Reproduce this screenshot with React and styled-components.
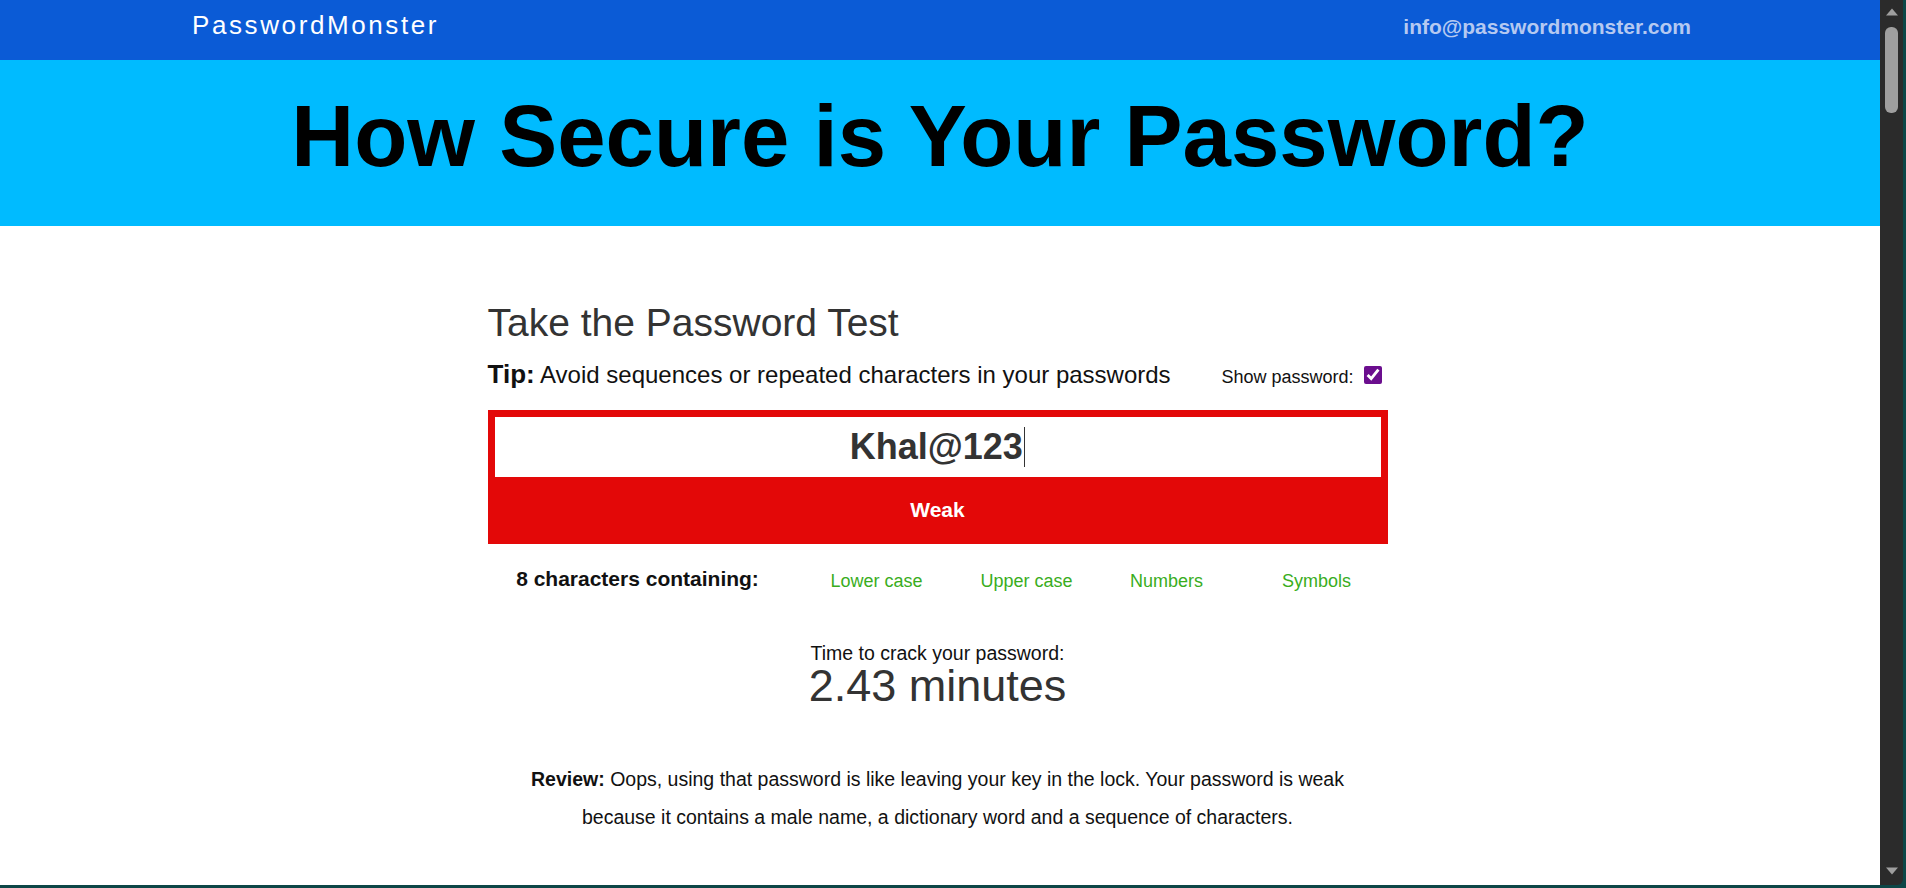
import React from 'react'
import styled, { createGlobalStyle } from 'styled-components'

const GlobalStyle = createGlobalStyle`
  html, body {
    margin: 0;
    padding: 0;
    overflow: hidden;
  }
  body {
    font-family: "Liberation Sans", Arial, sans-serif;
  }
`;

const criteria = ["Lower case", "Upper case", "Numbers", "Symbols"];

const Window = styled.div`
  width: 1906px;
  height: 888px;
  background: #0d4647;
  display: flex;
  flex-direction: column;
`;
const Viewport = styled.div`
  height: 885px;
  display: flex;
`;
const Page = styled.div`
  width: 1880px;
  background: #fff;
  overflow: hidden;
`;
const Scrollbar = styled.div`
  width: 23px;
  background: #2b2b2b;
  border-bottom-right-radius: 6px;
  display: flex;
  flex-direction: column;
  align-items: center;
  padding: 8px 0 10px;
  box-sizing: border-box;
`;
const Thumb = styled.div`
  width: 13px;
  height: 86px;
  margin-top: 11px;
  border-radius: 6px;
  background: #9f9f9f;
`;
const Track = styled.div`
  flex: 1;
`;

const Nav = styled.header`
  height: 60px;
  background: #0b5bd6;
`;
const NavInner = styled.div`
  width: 1500px;
  height: 100%;
  margin: 0 auto;
  display: flex;
  justify-content: space-between;
  align-items: center;
  padding-bottom: 6px;
  box-sizing: border-box;
`;
const Brand = styled.a`
  color: #fff;
  font-size: 26px;
  letter-spacing: 2.6px;
  text-decoration: none;
  margin-left: 2px;
  padding-bottom: 4px;
`;
const Email = styled.a`
  color: #b5c9f1;
  font-size: 21px;
  font-weight: bold;
  text-decoration: none;
  margin-right: -1px;
`;

const Hero = styled.section`
  height: 166px;
  background: #00bbff;
  padding-top: 32px;
  box-sizing: border-box;
`;
const Heading = styled.h1`
  margin: 0;
  font-size: 87px;
  line-height: 1;
  font-weight: bold;
  color: #000;
  text-align: center;
`;

const Main = styled.main`
  width: 900px;
  margin: 0 auto;
  padding: 74px 5px 0 0;
`;
const Title = styled.h2`
  margin: 0;
  font-size: 39px;
  line-height: 1.2;
  font-weight: normal;
  color: #333;
`;
const TipRow = styled.div`
  margin-top: 12px;
  display: flex;
  justify-content: space-between;
  align-items: baseline;
`;
const Tip = styled.p`
  margin: 0;
  font-size: 24px;
  line-height: 1.2;
  color: #111;
  b {
    font-size: 26px;
  }
`;
const Toggle = styled.label`
  display: flex;
  align-items: center;
  gap: 10px;
  font-size: 18px;
  color: #111;
  margin-right: 6px;
`;
const Check = styled.input`
  width: 18px;
  height: 18px;
  margin: 0 0 4px;
  accent-color: #6b0e8e;
`;

const Meter = styled.div`
  margin-top: 20px;
  background: #e30808;
  padding: 7px 7px 0;
`;
const Field = styled.div`
  height: 60px;
  background: #fff;
  display: flex;
  justify-content: center;
  align-items: center;
  font-size: 36px;
  font-weight: bold;
  color: #333;
`;
const Caret = styled.span`
  width: 1.5px;
  height: 40px;
  margin-left: 1px;
  background: #333;
`;
const Strength = styled.div`
  height: 67px;
  display: flex;
  justify-content: center;
  align-items: center;
  color: #fff;
  font-size: 21px;
  font-weight: bold;
`;

const Composition = styled.div`
  margin-top: 22px;
  display: grid;
  grid-template-columns: 300px 178px 122px 158px 1fr;
  align-items: center;
  line-height: 24px;
  text-align: center;
`;
const Count = styled.span`
  font-size: 21px;
  font-weight: bold;
  color: #111;
`;
const Criterion = styled.span`
  font-size: 18px;
  color: ${(props) => (props.met ? "#39ad1d" : "#bbb")};
  padding-top: 3px;
`;

const Crack = styled.div`
  margin-top: 50px;
  text-align: center;
`;
const CrackLabel = styled.div`
  font-size: 19.5px;
  line-height: 21px;
  color: #111;
`;
const CrackTime = styled.div`
  font-size: 45px;
  line-height: 44px;
  color: #333;
`;

const Review = styled.p`
  width: 830px;
  margin: 52px auto 0;
  font-size: 19.5px;
  line-height: 38px;
  text-align: center;
  color: #111;
`;

function Arrow({ down }) {
  return (
    <svg width="14" height="8" viewBox="0 0 14 8">
      <path d={down ? "M1 0.5 H13 L7 7.5 Z" : "M7 0.5 L13 7.5 H1 Z"} fill="#9f9f9f" />
    </svg>
  );
}

export default function App() {
  return (
    <Window>
      <GlobalStyle />
      <Viewport>
        <Page>
          <Nav>
            <NavInner>
              <Brand href="#">PasswordMonster</Brand>
              <Email href="#">info@passwordmonster.com</Email>
            </NavInner>
          </Nav>
          <Hero>
            <Heading>How Secure is Your Password?</Heading>
          </Hero>
          <Main>
            <Title>Take the Password Test</Title>
            <TipRow>
              <Tip>
                <b>Tip:</b> Avoid sequences or repeated characters in your passwords
              </Tip>
              <Toggle>
                Show password:
                <Check type="checkbox" defaultChecked />
              </Toggle>
            </TipRow>
            <Meter>
              <Field>
                Khal@123
                <Caret />
              </Field>
              <Strength>Weak</Strength>
            </Meter>
            <Composition>
              <Count>8 characters containing:</Count>
              {criteria.map((item) => (
                <Criterion key={item} met>
                  {item}
                </Criterion>
              ))}
            </Composition>
            <Crack>
              <CrackLabel>Time to crack your password:</CrackLabel>
              <CrackTime>2.43 minutes</CrackTime>
            </Crack>
            <Review>
              <b>Review:</b> Oops, using that password is like leaving your key in the lock. Your password is weak because it contains a male name, a dictionary word and a sequence of characters.
            </Review>
          </Main>
        </Page>
        <Scrollbar>
          <Arrow />
          <Thumb />
          <Track />
          <Arrow down />
        </Scrollbar>
      </Viewport>
    </Window>
  )
}
